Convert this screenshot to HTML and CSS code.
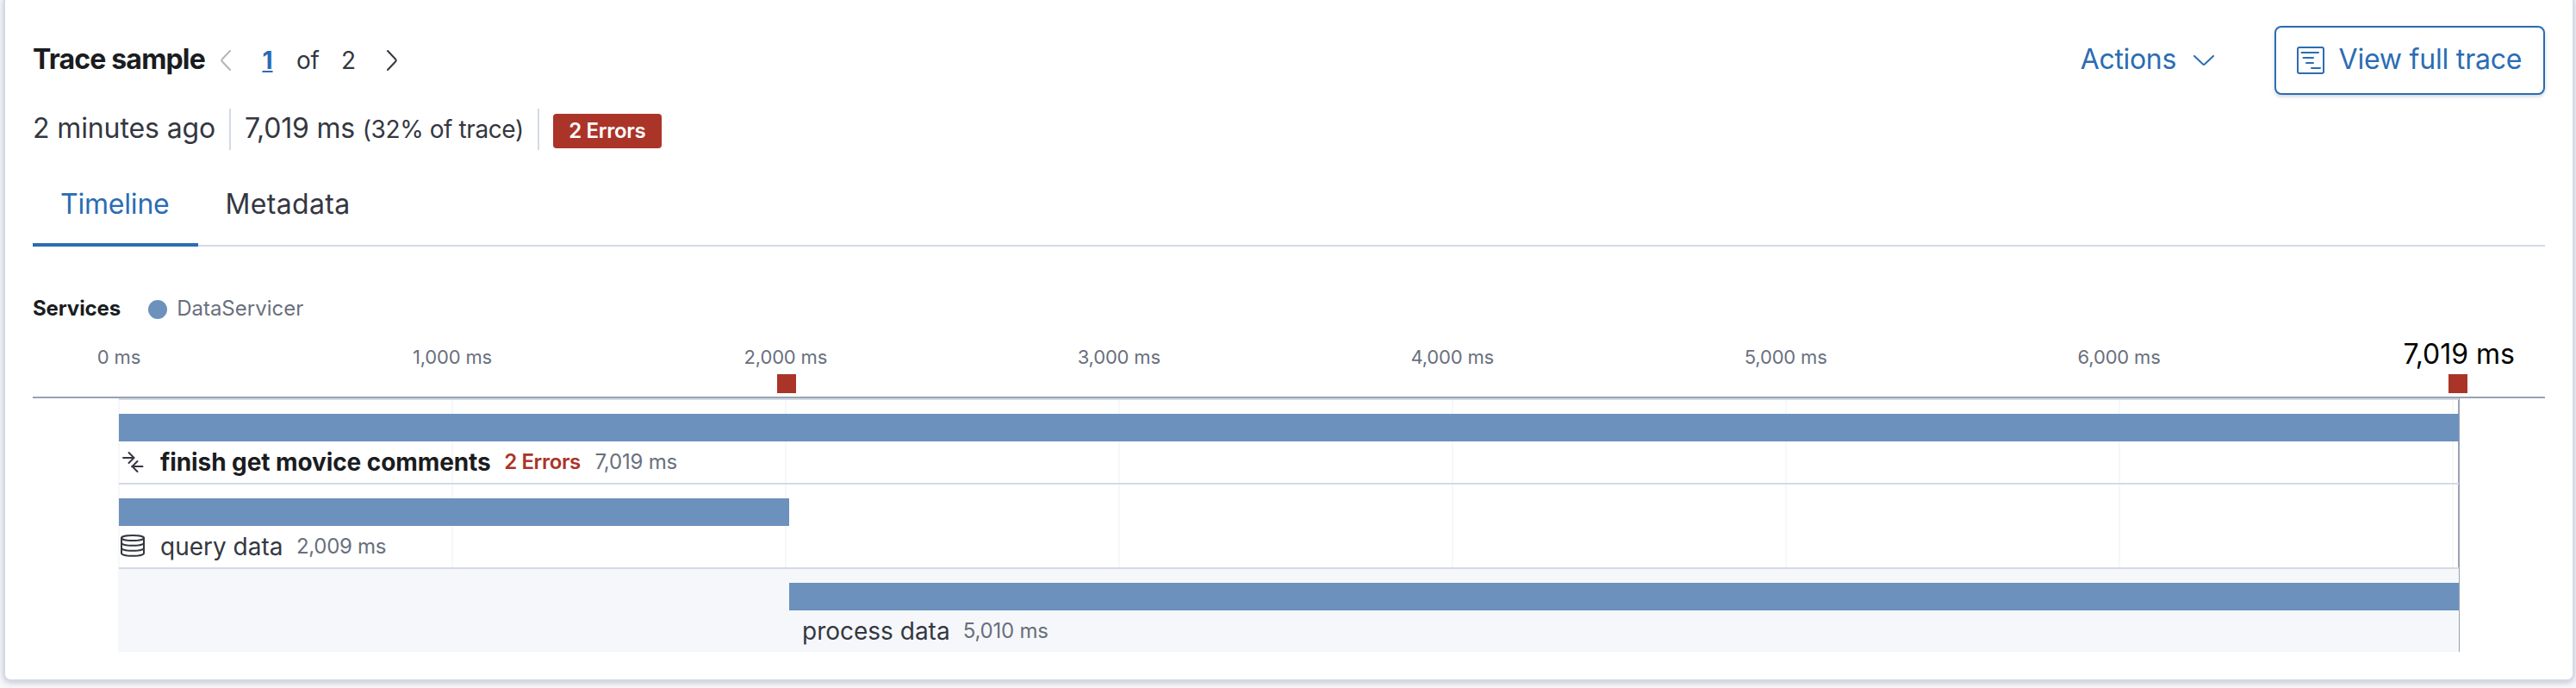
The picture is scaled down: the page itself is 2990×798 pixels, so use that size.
FILE: index.html
```html
<!DOCTYPE html>
<html lang="en">
<head>
<meta charset="utf-8">
<title>Trace sample</title>
<link rel="stylesheet" href="styles.css">
</head>
<body>
<main class="panel">
  <header class="header">
    <h2 class="title">Trace sample</h2>
    <nav class="pager">
      <svg class="chevron prev" viewBox="0 0 12 24"><path d="M11 1 1.8 10.8a1.8 1.8 0 0 0 0 2.4L11 23"/></svg>
      <span class="page current">1</span>
      <span class="page of">of</span>
      <span class="page total">2</span>
      <svg class="chevron next" viewBox="0 0 12 24"><path d="M1 1l9.2 9.8a1.8 1.8 0 0 1 0 2.4L1 23"/></svg>
    </nav>
    <div class="actions">
      <span>Actions</span>
      <svg class="caret" viewBox="0 0 24 12"><path d="M1 1l9.8 9.3a1.8 1.8 0 0 0 2.4 0L23 1"/></svg>
    </div>
    <button class="full-trace">
      <svg class="trace-icon" viewBox="0 0 32 32"><rect x="1" y="1" width="30" height="30" rx="2"/><path d="M5.500 7H25M7.500 13h11.500M11 19h8M17 25h10"/></svg>
      <span>View full trace</span>
    </button>
  </header>

  <section class="summary">
    <span class="ago">2 minutes ago</span>
    <span class="duration">7,019 ms <small class="share">(32% of trace)</small></span>
    <span class="badge">2 Errors</span>
  </section>

  <nav class="tabs">
    <a class="tab selected">Timeline</a>
    <a class="tab metadata">Metadata</a>
  </nav>

  <div class="legend">
    <strong class="legend-title">Services</strong>
    <span class="dot"></span>
    <span class="legend-name">DataServicer</span>
  </div>

  <div class="axis">
    <div class="ticks">
      <span class="tick">0 ms</span>
      <span class="tick">1,000 ms</span>
      <span class="tick">2,000 ms</span>
      <span class="tick">3,000 ms</span>
      <span class="tick">4,000 ms</span>
      <span class="tick">5,000 ms</span>
      <span class="tick">6,000 ms</span>
    </div>
    <span class="tick-end">7,019 ms</span>
    <i class="marker first"></i><i class="marker last"></i>
  </div>

  <div class="plot">
    <i class="grid-line" style="left:0%"></i><i class="grid-line" style="left:14.247%"></i><i class="grid-line" style="left:28.494%"></i><i class="grid-line" style="left:42.741%"></i><i class="grid-line" style="left:56.988%"></i><i class="grid-line" style="left:71.235%"></i><i class="grid-line" style="left:85.482%"></i><i class="grid-line" style="left:99.729%"></i><i class="grid-line end" style="left:100%"></i>
    <div class="row">
      <div class="bar" style="width:100%"></div>
      <div class="label">
        <svg class="icon" viewBox="0 0 32 32"><path d="M5 11h12.500M11.500 5l6 6-6 6M27.500 21H15M21.500 15l-6 6 6 6"/></svg>
        <strong class="name">finish get movice comments</strong><span class="errors">2 Errors</span><span class="ms total-ms">7,019 ms</span>
      </div>
    </div>
    <div class="row">
      <div class="bar" style="width:28.645%"></div>
      <div class="label">
        <svg class="icon" viewBox="0 0 32 32"><ellipse cx="16" cy="6" rx="13" ry="3"/><path d="M3 6v17.500c0 2 5.500 3.300 13 3.300s13-1.300 13-3.300V6M3 11.500c0 2 5.500 3.300 13 3.300s13-1.300 13-3.300M3 17.500c0 2 5.500 3.300 13 3.300s13-1.300 13-3.300"/></svg>
        <span class="name">query data</span><span class="ms wide">2,009 ms</span>
      </div>
    </div>
    <div class="row shaded" style="padding-left:28.645%">
      <div class="bar"></div>
      <div class="label bare">
        <span class="name">process data</span><span class="ms">5,010 ms</span>
      </div>
    </div>
  </div>
</main>
</body>
</html>
```
FILE: styles.css
```css
*{box-sizing:border-box}
body{margin:0;height:798px;overflow:hidden;background:#f7f8fc;font-family:Inter,"Liberation Sans",sans-serif;color:#343741}
.panel{margin:-6px 2px 0 4px;height:796px;padding:36px 32px 0;border:2px solid #d3dae6;border-radius:8px;background:#fff;box-shadow:0 2px 6px rgba(105,112,125,.28),0 0 12px rgba(105,112,125,.12)}

.header{display:flex;height:80px;margin-top:-2px;align-items:center}
.title{margin:0;font-size:32px;line-height:77px;height:80px;letter-spacing:-.82px;color:#1a1c21;font-weight:700}
.pager{display:flex;align-items:center;font-size:28px;line-height:80px}
.chevron{width:12px;height:24px;fill:none;stroke:#343741;stroke-width:2;stroke-linecap:round}
.prev{stroke:#b4b6ba;margin-left:18px}
.current{margin-left:36.5px;font-weight:700;color:#2b6cb4;text-decoration:underline}
.of{margin-left:27.5px;letter-spacing:-.3px}
.total{margin-left:25.5px}
.next{margin-left:35.5px}
.actions{display:flex;align-items:center;gap:20px;margin-left:auto;margin-right:70px;font-size:32px;height:80px;line-height:77px;letter-spacing:-.32px;color:#2b6cb4}
.actions span,.full-trace span{align-self:flex-start}
.caret{width:24px;height:12px;fill:none;stroke:#2b6cb4;stroke-width:2;stroke-linecap:round}
.full-trace{display:flex;align-items:center;width:314px;height:80px;padding:0 0 0 24px;gap:16.5px;border:2px solid #2b6cb4;border-radius:8px;background:#fff;box-shadow:0 2px 4px rgba(60,90,120,.25);font:32px/73px Inter,sans-serif;letter-spacing:-.2px;color:#2b6cb4}
.trace-icon{width:32px;height:32px;fill:none;stroke:#2b6cb4;stroke-width:2;stroke-linecap:round}

.summary{display:flex;height:48px;margin-top:16px;font-size:32px;line-height:45px}
.ago{letter-spacing:-.12px}
.duration{margin-left:16px;padding:0 16px;border:solid #d3dae6;border-width:0 2px;letter-spacing:-.2px}
.share{font-size:28px;letter-spacing:-.4px}
.badge{height:40px;width:126px;margin:6px 0 0 16px;border-radius:4px;background:#ab3428;color:#fff;font-size:24px;font-weight:600;line-height:39px;letter-spacing:-.3px;text-align:center}

.tabs{display:flex;height:80px;margin-top:32px;box-shadow:inset 0 -2px #d3dae6;font-size:32px;line-height:61px}
.tab{padding:0 32px}
.selected{width:192px;letter-spacing:-.2px;color:#2b6cb4;border-bottom:4px solid #2b6cb4}
.metadata{padding-left:31.5px;letter-spacing:.35px}

.legend{display:flex;height:40px;margin-top:53px;font-size:24px;line-height:38px}
.legend-title{color:#1a1c21;letter-spacing:-.1px}
.dot{align-self:center;width:22px;height:22px;margin:0 11px 0 32px;border-radius:50%;background:#6c91bc}
.legend-name,.ms{color:#69707d}

.axis{position:relative;display:flex;height:83px;border-bottom:2px solid #98a2b3}
.ticks{display:flex;margin-left:-93.5px;font-size:22px;line-height:70px;letter-spacing:-.18px;color:#69707d}
.tick{width:386.950px;text-align:center}
.tick-end{margin-left:auto;padding-right:35px;font-size:32px;line-height:63px;color:#000}
.marker{position:absolute;top:55px;width:22px;height:22px;background:#ab3428}
.first{left:864px}
.last{left:2804px}

.plot{position:relative;height:294px;margin:0 100px}
.grid-line{position:absolute;top:0;bottom:0;width:2px;margin-left:-1px;background:#f5f7fa}
.end{background:#98a2b3}
.row{position:relative;height:98px;padding-top:16px;border-top:2px solid #d3dae6}
.shaded{background:#f5f7fa}
.bar{height:32px;background:#6c91bc}
.label{display:flex;align-items:flex-start;height:48px;font-size:24px;line-height:47px}
.icon{width:32px;height:32px;margin-top:8px;fill:none;stroke:#343741;stroke-width:2;stroke-linecap:round}
.name{font-size:28px;line-height:48px;margin-left:16px}
.name:is(strong){color:#1a1c21;letter-spacing:-.09px}
.errors{margin-left:15.5px;color:#ab3428;font-weight:600;letter-spacing:-.35px}
.ms{margin-left:15.5px;letter-spacing:-.2px}
.total-ms{margin-left:16.5px}
.wide{letter-spacing:-.32px}
.bare .name{margin-left:15px}
.bare .ms{margin-left:15px}
```
